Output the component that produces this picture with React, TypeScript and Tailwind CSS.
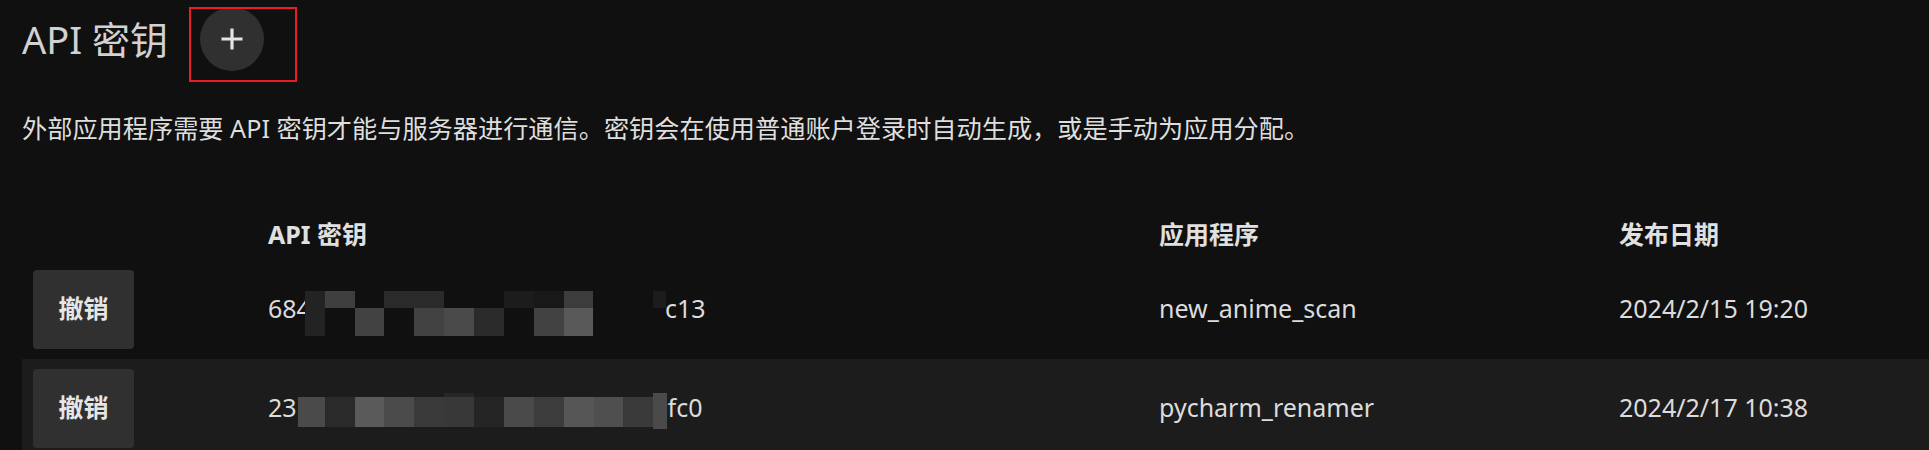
import React from "react";

type Rect = { x: number; y: number; w: number; h: number; c: string };

const mosaic1: Rect[] = [
  { x: 37, y: 31, w: 20, h: 45, c: "#232323" },
  { x: 57, y: 31, w: 30, h: 17, c: "#3f3f3f" },
  { x: 87, y: 48, w: 29, h: 28, c: "#424242" },
  { x: 116, y: 31, w: 30, h: 17, c: "#2a2a2a" },
  { x: 146, y: 31, w: 30, h: 17, c: "#2a2a2a" },
  { x: 146, y: 48, w: 30, h: 28, c: "#424242" },
  { x: 176, y: 48, w: 30, h: 28, c: "#4a4a4a" },
  { x: 206, y: 48, w: 30, h: 28, c: "#2b2b2b" },
  { x: 236, y: 31, w: 30, h: 17, c: "#1c1c1c" },
  { x: 266, y: 31, w: 30, h: 17, c: "#181818" },
  { x: 266, y: 48, w: 30, h: 28, c: "#424242" },
  { x: 296, y: 31, w: 29, h: 17, c: "#3c3c3c" },
  { x: 296, y: 48, w: 29, h: 28, c: "#595959" },
  { x: 385, y: 31, w: 13, h: 17, c: "#1c1c1c" },
];

const mosaic2: Rect[] = [
  { x: 30, y: 38, w: 27, h: 30, c: "#4a4a4a" },
  { x: 57, y: 38, w: 30, h: 30, c: "#2a2a2a" },
  { x: 87, y: 38, w: 29, h: 30, c: "#5a5a5a" },
  { x: 116, y: 38, w: 30, h: 30, c: "#4b4b4b" },
  { x: 146, y: 38, w: 30, h: 30, c: "#3a3a3a" },
  { x: 176, y: 34, w: 30, h: 4, c: "#262626" },
  { x: 176, y: 38, w: 30, h: 30, c: "#383838" },
  { x: 206, y: 38, w: 30, h: 30, c: "#252525" },
  { x: 236, y: 38, w: 30, h: 30, c: "#4a4a4a" },
  { x: 266, y: 38, w: 30, h: 30, c: "#3c3c3c" },
  { x: 296, y: 38, w: 30, h: 30, c: "#565656" },
  { x: 326, y: 38, w: 29, h: 30, c: "#4f4f4f" },
  { x: 355, y: 38, w: 30, h: 30, c: "#3a3a3a" },
  { x: 355, y: 68, w: 30, h: 2, c: "#1e1e1e" },
  { x: 385, y: 34, w: 14, h: 36, c: "#4a4a4a" },
];

function Mosaic({ rects }: { rects: Rect[] }) {
  return (
    <svg
      className="absolute left-0 top-0 pointer-events-none"
      width={420}
      height={99}
      viewBox="0 0 420 99"
    >
      {rects.map((r, i) => (
        <rect key={i} x={r.x} y={r.y} width={r.w} height={r.h} fill={r.c} />
      ))}
    </svg>
  );
}

type Row = {
  head: string;
  gap: number;
  tail: string;
  app: string;
  date: string;
  mosaic: Rect[];
  bg: string;
};

const rows: Row[] = [
  {
    head: "684",
    gap: 354,
    tail: "c13",
    app: "new_anime_scan",
    date: "2024/2/15 19:20",
    mosaic: mosaic1,
    bg: "",
  },
  {
    head: "23",
    gap: 371,
    tail: "fc0",
    app: "pycharm_renamer",
    date: "2024/2/17 10:38",
    mosaic: mosaic2,
    bg: "bg-[#1c1c1c]",
  },
];

export default function App() {
  return (
    <div
      className="min-h-screen w-full overflow-hidden bg-[#101010] text-[#dcdcdc]"
      style={{ fontFamily: '"Noto Sans", "Noto Sans CJK SC", sans-serif' }}
    >
      <div className="relative flex h-[77px] items-center pl-[22px]">
        <h2 className="text-[38px] font-normal leading-none text-[#d2d2d2]">API 密钥</h2>
        <button className="ml-[32px] flex h-[64px] w-[64px] items-center justify-center rounded-full bg-[#303030]">
          <svg width="22" height="22" viewBox="0 0 22 22">
            <path d="M11 0.5V21.5M0.5 11H21.5" stroke="#e4e4e4" strokeWidth="3.2" fill="none" />
          </svg>
        </button>
        <div className="pointer-events-none absolute left-[189px] top-[7px] h-[75px] w-[108px] border-2 border-[#ec1c24]" />
      </div>

      <p className="mt-[33px] pl-[22px] text-[25.2px] leading-[37.5px] text-[#dedede]">
        外部应用程序需要 API 密钥才能与服务器进行通信。密钥会在使用普通账户登录时自动生成，或是手动为应用分配。
      </p>

      <div className="ml-[22px] mt-[62px]">
        <div className="grid h-[50px] grid-cols-[246px_891px_460px_1fr] items-center text-[25px] font-bold text-[#e0e0e0]">
          <div />
          <div>API 密钥</div>
          <div>应用程序</div>
          <div>发布日期</div>
        </div>
        {rows.map((r, i) => (
          <div
            key={i}
            className={`grid h-[99px] grid-cols-[246px_891px_460px_1fr] items-center text-[25px] ${r.bg}`}
          >
            <div className="pl-[11px]">
              <button className="flex h-[79px] w-[101px] items-center justify-center rounded-[4px] bg-[#303030] text-[25px] font-bold text-[#e6e6e6]">
                撤销
              </button>
            </div>
            <div className="relative flex h-[99px] items-center">
              <span>{r.head}</span>
              <span className="inline-block" style={{ width: r.gap }} />
              <span>{r.tail}</span>
              <Mosaic rects={r.mosaic} />
            </div>
            <div>{r.app}</div>
            <div>{r.date}</div>
          </div>
        ))}
      </div>
    </div>
  );
}
